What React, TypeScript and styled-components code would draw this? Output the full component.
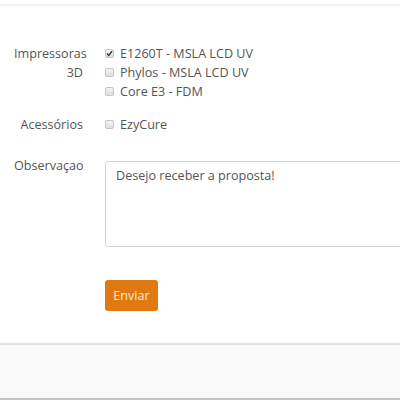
import React from 'react';
import styled, {createGlobalStyle} from 'styled-components';


const GlobalStyle = createGlobalStyle`
  html, body {
    margin: 0;
    padding: 0;
    background: #ffffff;
  }
  body {
    font-family: "Open Sans", "Liberation Sans", sans-serif;
    color: #555555;
  }
`;

const groups = [
    {label: 'Impressoras 3D', options: [
        {title: 'E1260T - MSLA LCD UV', checked: true},
        {title: 'Phylos - MSLA LCD UV', checked: false},
        {title: 'Core E3 - FDM', checked: false},
    ]},
    {label: 'Acessórios', options: [
        {title: 'EzyCure', checked: false},
    ]},
];


const Checkbox = ({checked}: {checked: boolean}) => (
    <Box>
        {checked && (
            <svg width="7" height="7" viewBox="0 0 7 7">
                <path d="M1 3.6 L2.8 5.4 L6 1.2" fill="none" stroke="#333" strokeWidth="1.4"/>
            </svg>
        )}
    </Box>
);


export default function App() {
    return (
        <Page>
            <GlobalStyle/>
            <TopEdge/>

            <Form>
                {groups.map((group, key) => (
                    <FieldRow key={key} spacing={key === 0 ? 38 : 14}>
                        <Label>{group.label}</Label>
                        <Options>
                            {group.options.map((option, i) => (
                                <Option key={i}>
                                    <Checkbox checked={option.checked}/>
                                    <span>{option.title}</span>
                                </Option>
                            ))}
                        </Options>
                    </FieldRow>
                ))}

                <FieldRow spacing={27}>
                    <Label shift={-5}>Observaçao</Label>
                    <TextArea>Desejo receber a proposta!</TextArea>
                </FieldRow>

                <FieldRow spacing={33}>
                    <Label/>
                    <Button>Enviar</Button>
                </FieldRow>
            </Form>

            <Footer/>
        </Page>
    );
}


const Page = styled.div`
  width: 400px;
  height: 400px;
  display: flex;
  flex-direction: column;
  overflow: hidden;
`;
const TopEdge = styled.div`
  height: 4px;
  border-bottom: 2px solid #f2f2f2;
  flex-shrink: 0;
`;
const Form = styled.div`
  flex: 1;
  display: flex;
  flex-direction: column;
`;
const FieldRow = styled.div<{spacing: number}>`
  display: grid;
  grid-template-columns: 83px 1fr;
  column-gap: 22px;
  margin-top: ${p => p.spacing}px;
  font-size: 12.6px;
  line-height: 19px;
`;
const Label = styled.div<{shift?: number}>`
  text-align: right;
  padding-left: 14px;
  margin-top: ${p => p.shift || 0}px;
  color: #555555;
`;
const Options = styled.div`
  display: flex;
  flex-direction: column;
`;
const Option = styled.div`
  display: flex;
  align-items: center;
  gap: 6px;
  color: #555555;
`;
const Box = styled.span`
  width: 7px;
  height: 7px;
  border: 1px solid #c4c4c4;
  border-radius: 2px;
  background: linear-gradient(#f4f4f4, #dcdcdc);
  display: flex;
  align-items: center;
  justify-content: center;
  flex-shrink: 0;
`;
const TextArea = styled.div`
  height: 86px;
  box-sizing: border-box;
  margin-right: -20px;
  border: 1px solid #d5d5d5;
  border-radius: 3px;
  padding: 4px 10px;
  color: #555555;
`;
const Button = styled.button`
  justify-self: start;
  width: 53px;
  height: 31px;
  border: none;
  border-radius: 3px;
  background: #e07a10;
  color: #fbe6cf;
  font-family: "Open Sans", "Liberation Sans", sans-serif;
  font-size: 12.6px;
  padding: 0;
`;
const Footer = styled.div`
  height: 57px;
  flex-shrink: 0;
  background: #f9f9f9;
  border-top: 2px solid #e2e2e2;
  border-bottom: 2px solid #c4c4c4;
  box-sizing: border-box;
`;
